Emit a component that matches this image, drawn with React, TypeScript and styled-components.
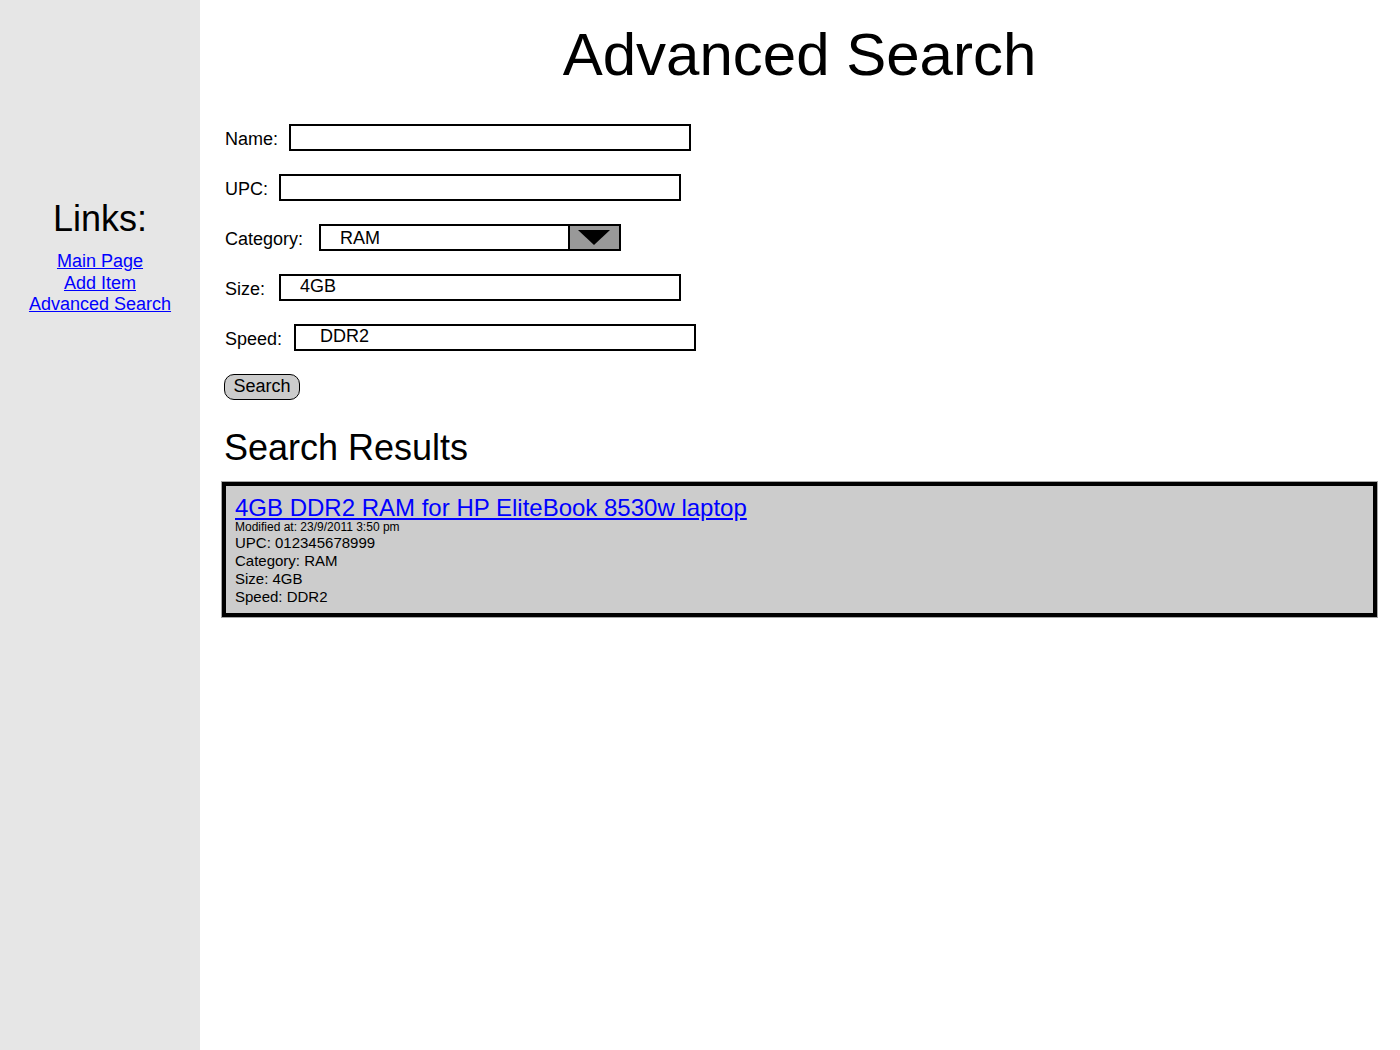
import React from 'react';
import styled, { createGlobalStyle } from 'styled-components';

const GlobalStyle = createGlobalStyle`
  html, body {
    margin: 0;
    padding: 0;
    background: #fff;
    font-family: 'Liberation Sans', Arial, sans-serif;
    color: #000;
  }
`;

const Page = styled.div`
  display: flex;
  min-height: 100vh;
`;

const Sidebar = styled.nav`
  flex: 0 0 200px;
  background-color: #e6e6e6;
  padding-top: 198px;
  text-align: center;
  box-sizing: border-box;
`;

const SidebarTitle = styled.h2`
  margin: 0 0 11px;
  font-size: 36px;
  line-height: 42px;
  font-weight: normal;
`;

const SideLink = styled.a`
  display: block;
  font-size: 18px;
  line-height: 21.5px;
  color: #0000ff;
  text-decoration: underline;
`;

const Main = styled.main`
  flex: 1;
  padding: 20px 23px 0 22px;
`;

const Title = styled.h1`
  margin: 0 0 34px;
  text-align: center;
  font-size: 60px;
  line-height: 70px;
  font-weight: normal;
`;

const Form = styled.form`
  display: flex;
  flex-direction: column;
  gap: 23px;
  padding-left: 3px;
`;

const Row = styled.div`
  display: flex;
  align-items: center;
  height: 27px;
`;

const Label = styled.label<{ $width: number }>`
  flex: 0 0 ${p => p.$width}px;
  padding-top: 4px;
  font-size: 18px;
  line-height: 21px;
`;

const TextInput = styled.input<{ $indent?: number }>`
  box-sizing: border-box;
  width: 402px;
  height: 27px;
  border: 2px solid #000;
  border-radius: 0;
  padding: 0 0 3px ${p => p.$indent ?? 19}px;
  font-family: 'Liberation Sans', Arial, sans-serif;
  font-size: 18px;
  color: #000;
  background: #fff;
  outline: none;
`;

const SelectBox = styled.div`
  box-sizing: border-box;
  display: flex;
  width: 302px;
  height: 27px;
  border: 2px solid #000;
  background: #fff;
`;

const SelectValue = styled.span`
  flex: 1;
  padding-left: 19px;
  font-size: 18px;
  line-height: 25px;
`;

const SelectArrow = styled.span`
  flex: 0 0 49px;
  display: flex;
  align-items: center;
  justify-content: center;
  background: #999;
  border-left: 2px solid #000;
  svg {
    display: block;
    margin-left: -2px;
  }
`;

const SearchButton = styled.button`
  box-sizing: border-box;
  align-self: flex-start;
  margin-left: -1px;
  width: 76px;
  height: 26px;
  padding: 0 0 2px;
  border: 1px solid #000;
  border-radius: 10px;
  background: #ccc;
  font-family: 'Liberation Sans', Arial, sans-serif;
  font-size: 18px;
  color: #000;
`;

const ResultsHeading = styled.h2`
  margin: 27px 0 13px 2px;
  font-size: 36px;
  line-height: 42px;
  font-weight: normal;
`;

const ResultCard = styled.div`
  border: 4px solid #000;
  box-shadow: 0 0 0 1px rgba(0, 0, 0, 0.35);
  background: #ccc;
  padding: 9px 9px 7px 9px;
`;

const ResultLink = styled.a`
  display: block;
  font-size: 24px;
  line-height: 26px;
  color: #0000ff;
  text-decoration: underline;
`;

const Modified = styled.div`
  font-size: 12px;
  line-height: 13px;
`;

const Detail = styled.div`
  font-size: 15px;
  line-height: 18px;
`;

const links = ['Main Page', 'Add Item', 'Advanced Search'];

const fields = [
  { label: 'Name:', width: 64, value: '' },
  { label: 'UPC:', width: 54, value: '' }
];

const App: React.FC = () => {
  return (
    <Page>
      <GlobalStyle />
      <Sidebar>
        <SidebarTitle>Links:</SidebarTitle>
        {links.map(l => (
          <SideLink key={l} href="#">
            {l}
          </SideLink>
        ))}
      </Sidebar>
      <Main>
        <Title>Advanced Search</Title>
        <Form onSubmit={e => e.preventDefault()}>
          {fields.map(f => (
            <Row key={f.label}>
              <Label $width={f.width}>{f.label}</Label>
              <TextInput readOnly defaultValue={f.value} />
            </Row>
          ))}
          <Row>
            <Label $width={94}>Category:</Label>
            <SelectBox>
              <SelectValue>RAM</SelectValue>
              <SelectArrow>
                <svg width="32" height="15" viewBox="0 0 32 15">
                  <polygon points="0,0 32,0 16,15" fill="#000" />
                </svg>
              </SelectArrow>
            </SelectBox>
          </Row>
          <Row>
            <Label $width={54}>Size:</Label>
            <TextInput readOnly defaultValue="4GB" />
          </Row>
          <Row>
            <Label $width={69}>Speed:</Label>
            <TextInput readOnly defaultValue="DDR2" $indent={24} />
          </Row>
          <SearchButton type="submit">Search</SearchButton>
        </Form>
        <ResultsHeading>Search Results</ResultsHeading>
        <ResultCard>
          <ResultLink href="#">4GB DDR2 RAM for HP EliteBook 8530w laptop</ResultLink>
          <Modified>Modified at: 23/9/2011 3:50 pm</Modified>
          <Detail>UPC: 012345678999</Detail>
          <Detail>Category: RAM</Detail>
          <Detail>Size: 4GB</Detail>
          <Detail>Speed: DDR2</Detail>
        </ResultCard>
      </Main>
    </Page>
  );
};

export default App;
